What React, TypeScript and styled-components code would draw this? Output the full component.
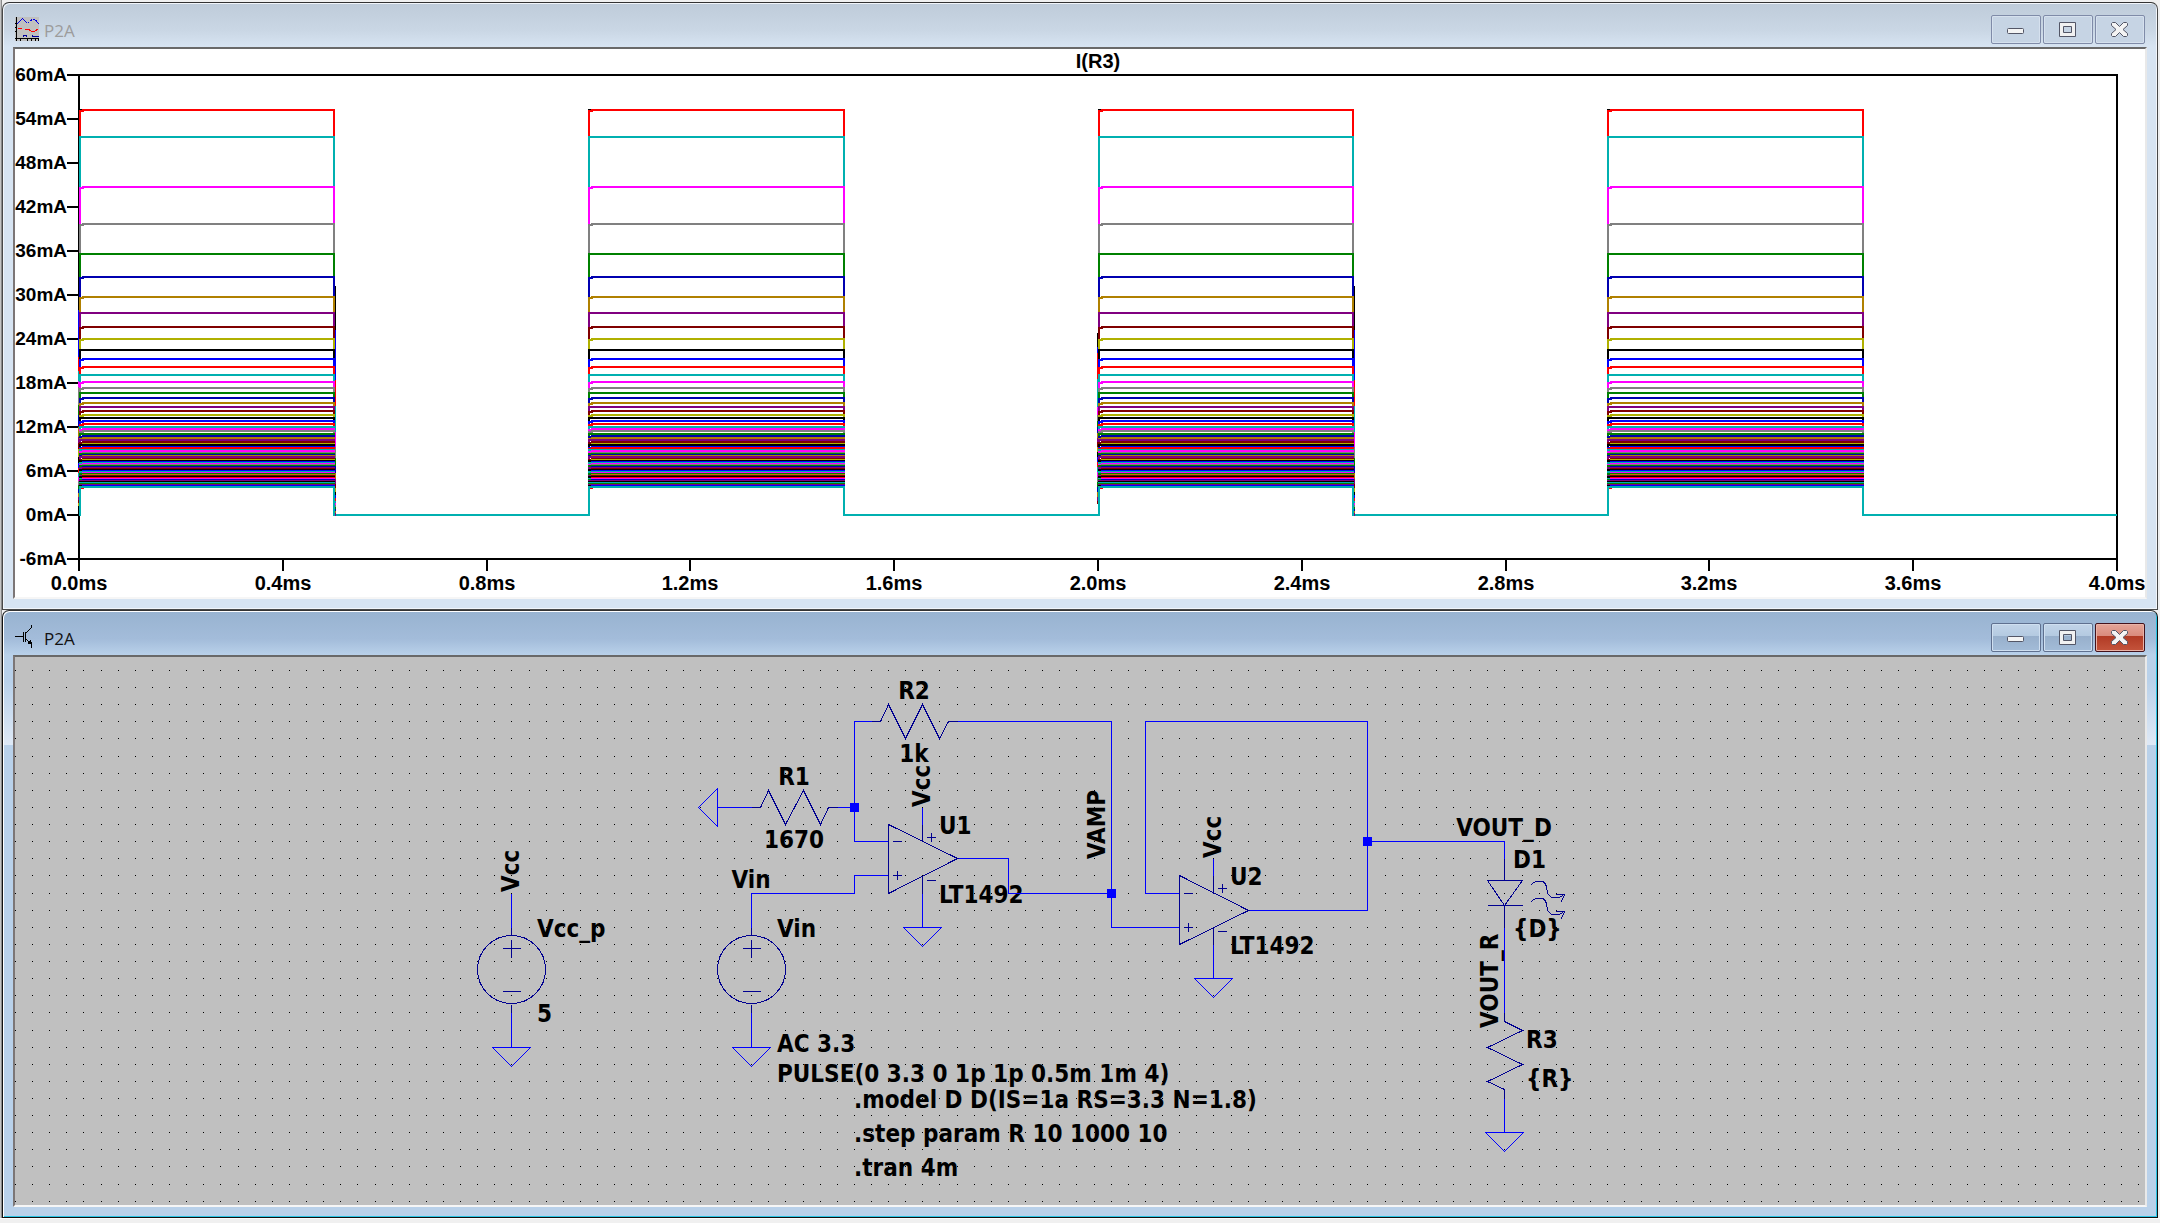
import React from 'react';
import styled, { createGlobalStyle } from 'styled-components';

const GlobalStyle = createGlobalStyle`
  *, *::before, *::after { box-sizing: border-box; }
  body {
    margin: 0;
    background: #f0f0f0;
    font-family: "Open Sans", "Noto Sans", sans-serif;
  }
`;

/* ---------- window chrome ---------- */

const Desktop = styled.main`
  display: flex;
  flex-direction: column;
  padding: 2px 2px 0;
  border-bottom: 1px solid #fdfdfd;
  box-shadow: inset 1px 0 0 #c4c4c4, inset 2px 0 0 #8a8a8a, 0 1px 0 #fdfdfd, 0 2px 0 #d4d4d4;
`;

const Frame = styled.section<{ $active: boolean }>`
  display: flex;
  flex-direction: column;
  padding: 0 10px 10px;
  border: 1px solid ${(p) => (p.$active ? '#111' : '#484848')};
  border-top-color: #333;
  border-radius: 7px 7px 0 0;
  background: ${(p) =>
    p.$active
      ? 'linear-gradient(to bottom, #98b3d0 0, #a3bcda 28px, #b9d1ea 44px, #b9d1ea 70px, #dfe9f6 134px, #b9d1ea 134px)'
      : 'linear-gradient(to bottom, #becbd9 0, #cad7e5 28px, #d7e4f2 44px)'};
  box-shadow: ${(p) =>
    p.$active
      ? 'inset 1px 1px 0 #fff, inset -1px -1px 0 #28c4e4'
      : 'inset 1px 1px 0 #f1f5fa, inset -1px -1px 0 #f1f5fa'};
`;

const TitleBar = styled.header`
  display: flex;
  align-items: center;
  height: 44px;
  padding: 0 2px;
`;

const Title = styled.h2<{ $active: boolean }>`
  flex: 1;
  margin: 0 0 0 5px;
  padding-top: 12px;
  font-size: 17px;
  line-height: 24px;
  font-weight: 400;
  color: ${(p) => (p.$active ? '#111' : '#9c9c9c')};
`;

const AppIcon = styled.svg`
  width: 24px;
  height: 24px;
  margin-top: 8px;
`;

const Controls = styled.div`
  display: flex;
  gap: 2px;
  padding-top: 9px;
`;

const looks = {
  idle: { edge: '#7f8ba8', shine: '#d6e1ee', fill: '#c6d4e4' },
  ready: {
    edge: '#5f708f',
    shine: '#cfdff0',
    fill: 'linear-gradient(to bottom, #c2d4e8 0, #b4cae1 44%, #97afcb 44%, #a3bcd8 100%)',
  },
  danger: {
    edge: '#43121c',
    shine: '#e9b3a8',
    fill: 'linear-gradient(to bottom, #e5a598 0, #d98b7d 44%, #b13a24 44%, #c4543c 100%)',
  },
};

const ControlButton = styled.button<{ $look: keyof typeof looks }>`
  display: flex;
  align-items: center;
  justify-content: center;
  width: 50px;
  height: 29px;
  padding: 0;
  border: 1px solid ${(p) => looks[p.$look].edge};
  border-radius: 2px;
  background: ${(p) => looks[p.$look].fill};
  box-shadow: inset 0 0 0 1px ${(p) => looks[p.$look].shine};
`;

const Glyph = styled.svg`
  width: 18px;
  height: 17px;
`;

const Well = styled.div<{ $fill: string }>`
  border: 2px solid;
  border-color: #696969 #e9e9e9 #f6f6f6 #7c7676;
  background: ${(p) => p.$fill};
`;

const Drawing = styled.svg`
  display: block;
  width: 100%;
  height: auto;
`;

const AxisText = styled.text<{ $compact?: boolean }>`
  font-family: "Liberation Sans", Arial, sans-serif;
  font-size: ${(p) => (p.$compact ? 19 : 20)}px;
  font-weight: 700;
  fill: #000;
`;

const NetText = styled.text`
  font-family: "DejaVu Sans Condensed", Tahoma, "DejaVu Sans", sans-serif;
  font-size: 24px;
  font-weight: 700;
  fill: #000;
`;

const glyphs: Record<string, React.ReactNode> = {
  Minimize: <rect x="1.5" y="7.5" width="16" height="5" rx="1" fill="#f4f4f4" stroke="#535666" />,
  Maximize: (
    <path
      d="M1.5 1.5h16v14h-16zM5.5 5.5v6h8v-6z"
      fill="#f1f1f1"
      fillRule="evenodd"
      stroke="#535666"
    />
  ),
  Close: (
    <path
      d="M2.5 1.5H5.5L9.5 5.5L13.5 1.5H16.5L17.5 2.5V4.5L13 8.5L17.5 12.5V14.5L16.5 15.5H13.5L9.5 11.5L5.5 15.5H2.5L1.5 14.5V12.5L6 8.5L1.5 4.5V2.5Z"
      fill="#f4f4f4"
      stroke="#535666"
    />
  ),
};

const WaveIcon = () => (
  <AppIcon viewBox="0 0 24 24" aria-hidden="true" shapeRendering="crispEdges">
    <rect width="24" height="24" fill="#c0c0c0" />
    <path d="M1.5 0V24M0 21.5H24M0 6.5H2M0 10.5H2M0 14.5H2M5.5 21V24M12.5 21V24M16.5 21V24M20.5 21V24M23.5 21V24" stroke="#000" fill="none" />
    <path d="M2 7L7.500 1.500L12.500 6.500" stroke="#0000e0" fill="none" />
    <path d="M13 6L17 2.500H20L24 7" stroke="#0000e0" strokeDasharray="2 1" fill="none" />
    <path d="M3 11.500H7M10 12.500H14L16 14H20L23 12" stroke="#f00" fill="none" />
    <path d="M8 19.500V18.500H11V19.500M17 18.500L18 19.500H24" stroke="#00009c" fill="none" />
  </AppIcon>
);

const TransistorIcon = () => (
  <AppIcon viewBox="0 0 24 24" aria-hidden="true" shapeRendering="crispEdges">
    <path d="M0 11.500H8M8.500 7V17M10.500 7V17M11 8L16 3V0M11 14L16 19V23" stroke="#000" fill="none" />
    <path d="M12 18L16 14L17 20Z" fill="#000" />
  </AppIcon>
);

interface WindowProps {
  title: string;
  active?: boolean;
  icon: React.ReactNode;
  fill: string;
  children: React.ReactNode;
}

function ChildWindow({ title, active = false, icon, fill, children }: WindowProps) {
  return (
    <Frame $active={active}>
      <TitleBar>
        {icon}
        <Title $active={active}>{title}</Title>
        <Controls>
          {['Minimize', 'Maximize', 'Close'].map((name) => (
            <ControlButton
              key={name}
              type="button"
              aria-label={name}
              $look={!active ? 'idle' : name === 'Close' ? 'danger' : 'ready'}
            >
              <Glyph viewBox="1 0 18 17" aria-hidden="true">
                {glyphs[name]}
              </Glyph>
            </ControlButton>
          ))}
        </Controls>
      </TitleBar>
      <Well $fill={fill}>{children}</Well>
    </Frame>
  );
}

/* ---------- waveform plot ---------- */

const LEFT = 64;
const RIGHT = 2102;
const ZERO = 466;
const PER_MS = (RIGHT - LEFT) / 4;
const PER_MA = 44 / 6;

const palette = [
  '#000000', '#0000ff', '#ff0000', '#00b0b0', '#ff00ff', '#808080',
  '#008000', '#0000b0', '#b08000', '#800080', '#800000', '#b0b000',
];

// Plateau current in mA for each step of R, 10 ohm to 1 kohm.
const measured = [
  55.2, 55.2, 55.2, 51.55, 44.7, 39.7, 35.6, 32.45, 29.75, 27.55, 25.65, 24, 22.5, 21.27,
  20.18, 19.1, 18.1, 17.3, 16.6, 15.95, 15.3, 14.7, 14.2, 13.65, 13.2, 12.8, 12.4, 12,
];
const plateaus = Array.from({ length: 100 }, (_, i) =>
  i < measured.length ? measured[i] : 4010 / ((i + 1) * 10 + 52) + 0.015,
);

const levelOf = (mA: number) => Math.round(ZERO - mA * PER_MA);
const xAt = (ms: number) => Math.round(LEFT + ms * PER_MS);

function tracePath(mA: number, index: number) {
  const y = levelOf(mA);
  const lag = index % 3 === 0 ? 0 : 1;
  let d = `M${LEFT} ${ZERO}`;
  for (let k = 0; k < 4; k += 1) {
    const on = xAt(k) + (k % 2 === 0 ? 1 : 0);
    const off = xAt(k + 0.5) + (k % 2);
    d += `H${on}V${y + lag}H${on + 3}V${y}H${off}V${ZERO}`;
  }
  return `${d}H${RIGHT}`;
}

// Narrow spikes at the pulse edges: top of each colour, starting colour.
const edges: { x: number; start: number; tops: number[] }[] = [
  { x: 63.5, start: 1, tops: [261, 308, 322, 332, 338, 356, 366, 378, 388, 394, 400, 408, 414, 419, 424, 428, 432, 436, 440, 444, 448, 451, 454] },
  { x: 320.5, start: 0, tops: [237, 281, 331, 357, 383, 398, 409, 417, 424, 430, 435, 439, 443, 446, 449, 452, 454, 456, 458, 460, 462, 464] },
  { x: 1082.5, start: 0, tops: [284, 298, 304, 330, 358, 366, 372, 378, 384, 389, 393, 398, 403, 408, 413, 418, 423, 428, 433, 438, 443, 448, 452] },
  { x: 1339.5, start: 0, tops: [237, 281, 331, 357, 383, 398, 409, 417, 424, 430, 435, 439, 443, 446, 449, 452, 454, 456, 458, 460, 462, 464] },
];

function Waveforms() {
  return (
    <Drawing viewBox="0 0 2130 548" role="img" aria-label="Current through R3 over time">
      <g shapeRendering="crispEdges" fill="none" strokeWidth="2">
        <path d={`M${LEFT} 26H${RIGHT}V510H${LEFT}Z`} stroke="#000" />
        {Array.from({ length: 12 }, (_, i) => (
          <path key={i} d={`M52 ${26 + i * 44}H${LEFT}`} stroke="#000" />
        ))}
        {Array.from({ length: 11 }, (_, i) => (
          <path key={i} d={`M${xAt(i * 0.4)} 510V522`} stroke="#000" />
        ))}
        {plateaus.map((mA, i) => (
          <path key={i} d={tracePath(mA, i)} stroke={palette[i % 12]} />
        ))}
        {edges.map((edge) =>
          edge.tops.map((top, i) => (
            <path
              key={`${edge.x}-${i}`}
              d={`M${edge.x} ${top}V${edge.tops[i + 1] ?? top + 3}`}
              stroke={palette[(edge.start + i) % 12]}
              strokeWidth="1"
            />
          )),
        )}
      </g>
      <AxisText x="1083" y="19" textAnchor="middle">I(R3)</AxisText>
      {Array.from({ length: 12 }, (_, i) => (
        <AxisText key={i} $compact x="52" y={32 + i * 44} textAnchor="end">
          {`${60 - i * 6}mA`}
        </AxisText>
      ))}
      {Array.from({ length: 11 }, (_, i) => (
        <AxisText key={i} x={xAt(i * 0.4)} y="541" textAnchor="middle">
          {`${(i * 0.4).toFixed(1)}ms`}
        </AxisText>
      ))}
    </Drawing>
  );
}

/* ---------- schematic ---------- */

const WIRE = '#0000ff';
const PART = '#000090';
const PITCH = 17.12;
const gx = (n: number) => Math.round(n * PITCH) + 0.5;
const gy = (m: number) => Math.round(m * PITCH) + 13.5;

type Point = [number, number];
const route = (points: Point[]) =>
  points.map(([n, m], i) => `${i ? 'L' : 'M'}${gx(n)} ${gy(m)}`).join('');

const Line = ({ points, part = false }: { points: Point[]; part?: boolean }) => (
  <path d={route(points)} stroke={part ? PART : WIRE} />
);

const Junction = ({ n, m }: { n: number; m: number }) => (
  <rect x={gx(n) - 4.5} y={gy(m) - 4.5} width="9" height="9" fill={WIRE} />
);

const Ground = ({ n, m, left = false }: { n: number; m: number; left?: boolean }) => (
  <path
    d={`M${gx(n)} ${gy(m)}${left ? 'v-19l-19 19l19 19z' : 'h-19l19 19l19 -19z'}`}
    stroke={WIRE}
  />
);

const Resistor = ({ n, m, upright = false }: { n: number; m: number; upright?: boolean }) => {
  const shape: Point[] = [[0, 0], [0.5, 0], [1, -1], [2, 1], [3, -1], [4, 1], [4.5, 0], [5, 0]];
  return (
    <Line part points={shape.map(([a, b]): Point => (upright ? [n - b, m + a] : [n + a, m + b]))} />
  );
};

const Source = ({ n }: { n: number }) => (
  <g>
    <circle cx={gx(n)} cy={gy(17.5) - 1} r="34" stroke={PART} />
    <path
      d={`M${gx(n) - 9} ${gy(16.25)}h18m-9 -9v18M${gx(n) - 9} ${gy(18.75)}h18`}
      stroke={PART}
    />
    <Line part points={[[n, 15], [n, 15.5]]} />
    <Line part points={[[n, 19.5], [n, 20]]} />
    <Line points={[[n, 20], [n, 22]]} />
    <Ground n={n} m={22} />
  </g>
);

const OpAmp = ({ n, m }: { n: number; m: number }) => (
  <g>
    <Line part points={[[n, m], [n, m + 4], [n + 4, m + 2], [n, m]]} />
    <path
      d={
        `M${gx(n + 0.5) - 4.5} ${gy(m + 1)}h9M${gx(n + 0.5) - 4.5} ${gy(m + 3)}h9m-4.5 -4.5v9` +
        `M${gx(n + 2.5) - 4.5} ${gy(m + 0.75)}h9m-4.5 -4.5v9M${gx(n + 2.5) - 4.5} ${gy(m + 3.25)}h9`
      }
      stroke={PART}
    />
    <Line points={[[n + 2, m - 1], [n + 2, m]]} />
    <Line part points={[[n + 2, m], [n + 2, m + 1]]} />
    <Line part points={[[n + 2, m + 3], [n + 2, m + 4]]} />
    <Line points={[[n + 2, m + 4], [n + 2, m + 6]]} />
    <Ground n={n + 2} m={m + 6} />
  </g>
);

const wires: Point[][] = [
  [[49, 10], [49, 3], [50, 3]],
  [[55, 3], [64, 3], [64, 15], [68, 15]],
  [[41, 8], [43, 8]],
  [[48, 8], [49, 8]],
  [[49, 10], [51, 10]],
  [[51, 12], [49, 12], [49, 13], [43, 13], [43, 15]],
  [[55, 11], [58, 11], [58, 13], [64, 13]],
  [[68, 13], [66, 13], [66, 3], [79, 3], [79, 14], [72, 14]],
  [[79, 10], [87, 10], [87, 11]],
  [[87, 15], [87, 20]],
  [[87, 25], [87, 27]],
  [[29, 13], [29, 15]],
];

interface Caption {
  text: string;
  x: number;
  y: number;
  anchor?: 'middle' | 'start';
  turned?: boolean;
}

const captions: Caption[] = [
  { text: 'R2', x: 899, y: 42, anchor: 'middle' },
  { text: '1k', x: 899, y: 105, anchor: 'middle' },
  { text: 'R1', x: 779, y: 128, anchor: 'middle' },
  { text: '1670', x: 779, y: 191, anchor: 'middle' },
  { text: 'Vcc', x: 915, y: 150, turned: true },
  { text: 'U1', x: 924, y: 177 },
  { text: 'LT1492', x: 924, y: 246 },
  { text: 'VAMP', x: 1090, y: 202, turned: true },
  { text: 'Vin', x: 736, y: 231, anchor: 'middle' },
  { text: 'Vin', x: 762, y: 280 },
  { text: 'Vcc', x: 1206, y: 201, turned: true },
  { text: 'U2', x: 1215, y: 228 },
  { text: 'LT1492', x: 1215, y: 297 },
  { text: 'VOUT_D', x: 1489, y: 179, anchor: 'middle' },
  { text: 'D1', x: 1498, y: 211 },
  { text: '{D}', x: 1498, y: 280 },
  { text: 'VOUT_R', x: 1483, y: 371, turned: true },
  { text: 'R3', x: 1511, y: 391 },
  { text: '{R}', x: 1511, y: 430 },
  { text: 'Vcc', x: 504, y: 235, turned: true },
  { text: 'Vcc_p', x: 522, y: 280 },
  { text: '5', x: 522, y: 365 },
  { text: 'AC 3.3', x: 762, y: 395 },
  { text: 'PULSE(0 3.3 0 1p 1p 0.5m 1m 4)', x: 762, y: 425 },
  { text: '.model D D(IS=1a RS=3.3 N=1.8)', x: 839, y: 451 },
  { text: '.step param R 10 1000 10', x: 839, y: 485 },
  { text: '.tran 4m', x: 839, y: 519 },
];

let dots = '';
for (let row = 0; row < 32; row += 1) {
  for (let col = 0; col < 125; col += 1) {
    dots += `M${gx(col) - 0.5} ${gy(row)}h1`;
  }
}

const lightRay = 'c4 -4 6 -4 9 -4c5 0 7 5 7 9c0 5 4 8 8 8c4 0 7 -1 9 -4m-8 0h9l-4 8';

function Schematic() {
  return (
    <Drawing viewBox="0 0 2130 548" role="img" aria-label="Circuit schematic">
      <path d={dots} stroke="#000" shapeRendering="crispEdges" />
      {captions.map((c) => (
        <NetText
          key={`${c.text}-${c.x}-${c.y}`}
          x={c.x}
          y={c.y}
          textAnchor={c.anchor ?? 'start'}
          transform={c.turned ? `rotate(-90 ${c.x} ${c.y})` : undefined}
        >
          {c.text}
        </NetText>
      ))}
      <g fill="none" strokeWidth="1" shapeRendering="crispEdges">
        {wires.map((points, i) => (
          <Line key={i} points={points} />
        ))}
        <Resistor n={50} m={3} />
        <Resistor n={43} m={8} />
        <Resistor n={87} m={20} upright />
        <Ground n={41} m={8} left />
        <Ground n={87} m={27} />
        <Source n={29} />
        <Source n={43} />
        <OpAmp n={51} m={9} />
        <OpAmp n={68} m={12} />
        <Line part points={[[87, 11], [87, 12.25]]} />
        <Line part points={[[86, 12.25], [88, 12.25], [87, 13.75], [86, 12.25]]} />
        <Line part points={[[86, 13.75], [88, 13.75]]} />
        <Line part points={[[87, 13.75], [87, 15]]} />
        <path d={`M1516 228${lightRay}M1516 245${lightRay}`} stroke={PART} />
      </g>
      <Junction n={49} m={8} />
      <Junction n={64} m={13} />
      <Junction n={79} m={10} />
    </Drawing>
  );
}

export default function App() {
  return (
    <>
      <GlobalStyle />
      <Desktop>
        <ChildWindow title="P2A" icon={<WaveIcon />} fill="#ffffff">
          <Waveforms />
        </ChildWindow>
        <ChildWindow title="P2A" active icon={<TransistorIcon />} fill="#c0c0c0">
          <Schematic />
        </ChildWindow>
      </Desktop>
    </>
  );
}
